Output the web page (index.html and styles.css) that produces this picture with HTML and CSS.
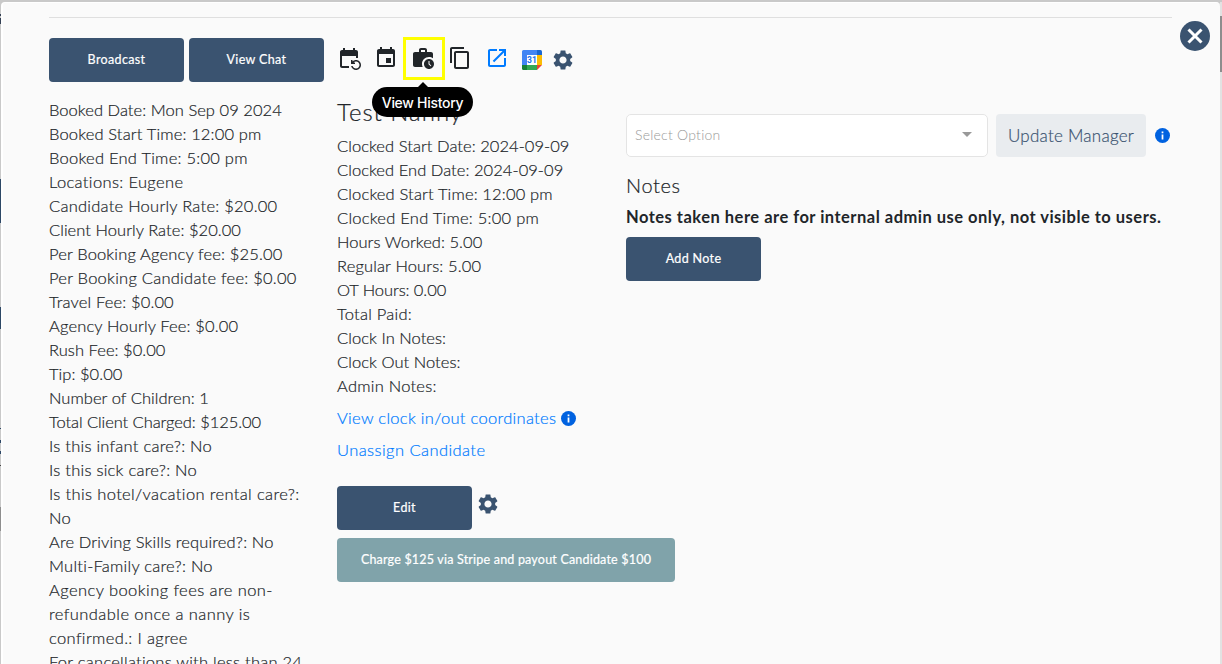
FILE: index.html
```html
<!DOCTYPE html>
<html lang="en">
<head>
<meta charset="utf-8">
<title>Booking details</title>
<link rel="stylesheet" href="styles.css">
</head>
<body>
<svg width="0" height="0" class="defs">
  <symbol id="gear" viewBox="0 0 24 24"><path d="M19.14 12.94c.04-.3.06-.61.06-.94 0-.32-.02-.64-.07-.94l2.03-1.58c.18-.14.23-.41.12-.61l-1.92-3.32c-.12-.22-.37-.29-.59-.22l-2.39.96c-.5-.38-1.03-.7-1.62-.94l-.36-2.54c-.04-.24-.24-.41-.48-.41h-3.84c-.24 0-.43.17-.47.41l-.36 2.54c-.59.24-1.13.57-1.62.94l-2.39-.96c-.22-.08-.47 0-.59.22L2.74 8.87c-.12.21-.08.47.12.61l2.03 1.58c-.05.3-.09.63-.09.94s.02.64.07.94l-2.03 1.58c-.18.14-.23.41-.12.61l1.92 3.32c.12.22.37.29.59.22l2.39-.96c.5.38 1.03.7 1.62.94l.36 2.54c.05.24.24.41.48.41h3.84c.24 0 .44-.17.47-.41l.36-2.54c.59-.24 1.13-.56 1.62-.94l2.39.96c.22.08.47 0 .59-.22l1.92-3.32c.12-.22.07-.47-.12-.61l-2.01-1.58zM12 15.600c-1.980 0-3.600-1.620-3.600-3.600s1.620-3.600 3.600-3.600 3.600 1.620 3.600 3.600-1.620 3.600-3.600 3.600z"/></symbol>
  <symbol id="info" viewBox="0 0 24 24"><path d="M12 0a12 12 0 1 0 0 24 12 12 0 0 0 0-24z"/><path class="info-i" d="M10.600 10.500h2.800v8h-2.800zM10.600 5.400h2.800v2.800h-2.800z"/></symbol>
</svg>
<div class="page">
  <div class="backdrop-edge"></div>
  <main class="modal">
    <hr class="rule">
    <div class="toolbar">
      <div class="buttons">
        <button class="btn">Broadcast</button>
        <button class="btn">View Chat</button>
      </div>
      <div class="icons">
        <svg class="icon" viewBox="0 0 24 24"><path d="M21 12V6c0-1.1-.9-2-2-2h-1V2h-2v2H8V2H6v2H5c-1.1 0-2 .9-2 2v14c0 1.1.9 2 2 2h7v-2H5V10h14v2h2zM15.64 20c.43 1.45 1.77 2.5 3.36 2.5 1.93 0 3.5-1.57 3.5-3.5s-1.57-3.5-3.5-3.5c-.95 0-1.82.38-2.45 1H18V18h-4v-4h1.5v1.43C16.4 14.55 17.64 14 19 14c2.76 0 5 2.24 5 5s-2.24 5-5 5c-2.42 0-4.44-1.72-4.9-4h1.54z"/></svg>
        <svg class="icon" viewBox="0 0 24 24"><path d="M17 12h-5v5h5v-5zM16 1v2H8V1H6v2H5c-1.11 0-1.99.9-1.99 2L3 19c0 1.1.89 2 2 2h14c1.1 0 2-.9 2-2V5c0-1.1-.9-2-2-2h-1V1h-2zm3 18H5V8h14v11z"/></svg>
        <span class="history">
          <svg class="icon" viewBox="0 0 24 24"><path d="M18 11c1.49 0 2.87.47 4 1.26V8c0-1.11-.89-2-2-2h-4V4c0-1.11-.89-2-2-2h-4c-1.11 0-2 .89-2 2v2H4c-1.11 0-1.99.89-1.99 2L2 19c0 1.11.89 2 2 2h7.68c-.43-.91-.68-1.92-.68-3 0-3.87 3.13-7 7-7zM10 4h4v2h-4V4z"/><path d="M18 13c-2.76 0-5 2.24-5 5s2.24 5 5 5 5-2.24 5-5-2.24-5-5-5zm1.65 7.35L17.5 18.2V15h1v2.79l1.85 1.85-.7.71z"/></svg>
          <span class="highlight"></span>
          <span class="tooltip">View History</span>
        </span>
        <svg class="icon" viewBox="0 0 24 24"><path d="M16 1H4c-1.1 0-2 .9-2 2v14h2V3h12V1zm3 4H8c-1.1 0-2 .9-2 2v14c0 1.1.9 2 2 2h11c1.1 0 2-.9 2-2V7c0-1.1-.9-2-2-2zm0 16H8V7h11v14z"/></svg>
        <svg class="icon launch" viewBox="0 0 24 24"><path d="M19 19H5V5h7V3H5c-1.11 0-2 .9-2 2v14c0 1.1.89 2 2 2h14c1.1 0 2-.9 2-2v-7h-2v7zM14 3v2h3.59l-9.83 9.83 1.41 1.41L19 6.41V10h2V3h-7z"/></svg>
        <svg class="gcal" viewBox="0 0 20 20">
          <path fill="#4285f4" d="M1.5 0H15v5H5v10H0V1.5A1.5 1.5 0 0 1 1.5 0z"/>
          <path fill="#1967d2" d="M15 0h3.5A1.5 1.5 0 0 1 20 1.5V5h-5z"/>
          <path fill="#fbbc04" d="M15 5h5v10h-5z"/>
          <path fill="#34a853" d="M5 15h10v5H5z"/>
          <path fill="#188038" d="M0 15h5v5H1.5A1.5 1.5 0 0 1 0 18.5z"/>
          <path fill="#ea4335" d="M15 15h5l-5 5z"/>
          <path fill="#fff" d="M5 5h10v10H5z"/>
          <text x="10" y="13" text-anchor="middle">31</text>
        </svg>
        <svg class="gear"><use href="#gear"/></svg>
      </div>
      <button class="close" aria-label="Close"><svg viewBox="0 0 30 30"><path d="M8.5 8.500l13 13M21.500 8.500l-13 13"/></svg></button>
    </div>
    <div class="columns">
      <section class="booking">
        <p class="snug">Booked Date: Mon Sep 09 2024</p>
        <p class="trim">Booked Start Time: 12:00 pm</p>
        <p>Booked End Time: 5:00 pm</p>
        <p class="loose">Locations: Eugene</p>
        <p>Candidate Hourly Rate: $20.00</p>
        <p class="snug">Client Hourly Rate: $20.00</p>
        <p class="trim">Per Booking Agency fee: $25.00</p>
        <p>Per Booking Candidate fee: $0.00</p>
        <p class="trim">Travel Fee: $0.00</p>
        <p class="trim">Agency Hourly Fee: $0.00</p>
        <p class="snug">Rush Fee: $0.00</p>
        <p class="snug">Tip: $0.00</p>
        <p class="snug">Number of Children: 1</p>
        <p class="tight">Total Client Charged: $125.00</p>
        <p>Is this infant care?: No</p>
        <p>Is this sick care?: No</p>
        <p class="loose">Is this hotel/vacation rental care?:<br>No</p>
        <p class="trim">Are Driving Skills required?: No</p>
        <p>Multi-Family care?: No</p>
        <p class="looser">Agency booking fees are non-<br>refundable once a nanny is</p>
        <p class="loose">confirmed.: I agree</p>
        <p>For cancellations with less than 24</p>
      </section>
      <section class="clock">
        <h2>Test Nanny</h2>
        <p class="snug">Clocked Start Date: 2024-09-09</p>
        <p class="snug">Clocked End Date: 2024-09-09</p>
        <p class="trim">Clocked Start Time: 12:00 pm</p>
        <p>Clocked End Time: 5:00 pm</p>
        <p class="snug">Hours Worked: 5.00</p>
        <p class="trim">Regular Hours: 5.00</p>
        <p class="tight">OT Hours: 0.00</p>
        <p>Total Paid:</p>
        <p class="snug">Clock In Notes:</p>
        <p class="snug">Clock Out Notes:</p>
        <p>Admin Notes:</p>
        <p class="link"><a>View clock in/out coordinates</a><svg class="info"><use href="#info"/></svg></p>
        <p class="link looser"><a>Unassign Candidate</a></p>
        <div class="edit-row"><button class="btn">Edit</button><svg class="gear"><use href="#gear"/></svg></div>
        <button class="btn charge">Charge $125 via Stripe and payout Candidate $100</button>
      </section>
      <section class="notes">
        <div class="manager">
          <div class="select"><span>Select Option</span><i class="caret"></i></div>
          <button class="update">Update Manager</button>
          <svg class="info"><use href="#info"/></svg>
        </div>
        <h3>Notes</h3>
        <p class="notice">Notes taken here are for internal admin use only, not visible to users.</p>
        <button class="btn">Add Note</button>
      </section>
    </div>
  </main>
  <div class="scrollbar"><div class="thumb"></div></div>
</div>
</body>
</html>
```
FILE: styles.css
```css
* { box-sizing: border-box; }
body {
  margin: 0;
  height: 664px;
  overflow: hidden;
  background: #c9c9c9;
  color: #212529;
  font: 300 16.5px/24px Lato, "Open Sans", sans-serif;
  letter-spacing: 0.25px;
}
h2, h3, p { margin: 0; }
p { white-space: nowrap; }
.booking p, .clock p, .clock h2, .notes h3, .update { -webkit-text-stroke: 0.2px; }
.trim { letter-spacing: 0.15px; }
.snug { letter-spacing: 0.05px; }
.tight { letter-spacing: -0.07px; }
.loose { letter-spacing: 0.36px; }
.looser { letter-spacing: 0.43px; }
svg { display: block; flex: none; }
button { font-family: inherit; letter-spacing: inherit; border: 0; padding: 0; }
.defs { position: absolute; }
.page { display: flex; height: 664px; padding-top: 2px; }
.backdrop-edge {
  width: 1px;
  background: linear-gradient(#c9c9c9 0 12px, #344054 12px 14px, #c9c9c9 14px 16px, #344054 16px 22px, #c9c9c9 22px 177px, #2d4866 177px 221px, #c9c9c9 221px 305px, #2d4866 305px 327px, #c9c9c9 327px 426px, #2d4866 426px 427px, #c9c9c9 427px 438px, #2d4866 438px 441px, #c9c9c9 441px 449px, #2d4866 449px 452px, #c9c9c9 452px 463px, #444 463px 464px, #c9c9c9 464px 505px, #8e8e8e 505px 529px, #c9c9c9 529px);
}
.modal {
  width: 1219px;
  padding: 14px 10px 0 46px;
  background: #fafafa;
  border-top: 1px solid #fff;
  border-left: 2px solid #fff;
  border-radius: 4px 4px 0 0;
  overflow: hidden;
}
.rule { width: 1123px; height: 1px; margin: 0; border: 0; background: #dfdfdf; }
.toolbar { display: flex; height: 80px; padding-top: 20px; }
.buttons { display: flex; gap: 5px; width: 288px; }
.btn {
  display: block;
  width: 135px;
  height: 44px;
  padding-bottom: 1px;
  border-radius: 4px;
  background: #3a5370;
  color: #fff;
  font-size: 12.5px;
  font-weight: 400;
  letter-spacing: 0.35px;
  white-space: nowrap;
  -webkit-text-stroke: 0.2px;
}
.icons { display: flex; gap: 13px; padding-top: 8px; fill: #212529; }
.icon { width: 24px; height: 24px; }
.launch { fill: #007bff; }
.gcal { width: 20px; height: 20px; margin: 4px 0 0; }
.gcal text { font: 700 8.5px Roboto, sans-serif; letter-spacing: 0; fill: #1a73e8; }
.icons .gear { margin: 2px 0 0 -4px; }
.gear { width: 24px; height: 24px; fill: #3a5370; }
.history { position: relative; height: 24px; }
.highlight {
  position: absolute;
  left: -8px;
  top: -9px;
  width: 42px;
  height: 43px;
  border: 3px solid #ff0;
}
.tooltip {
  position: absolute;
  z-index: 2;
  left: -39px;
  top: 41px;
  width: 101px;
  height: 30px;
  border-radius: 15px;
  background: #000;
  color: #fff;
  font: 500 14px/31px Inter, sans-serif;
  letter-spacing: -0.3px;
  text-align: center;
  white-space: nowrap;
}
.tooltip::before {
  content: "";
  position: absolute;
  left: 45px;
  top: -5px;
  border: 6px solid transparent;
  border-top: 0;
  border-bottom-color: #000;
}
.close { width: 30px; height: 30px; margin: -17px 0 0 auto; border-radius: 50%; background: #3a5370; }
.close path { stroke: #fff; stroke-width: 3; fill: none; }
.columns { display: grid; grid-template-columns: 288px 289px 1fr; }
.clock h2 { height: 36px; font-size: 24px; line-height: 28px; font-weight: 300; letter-spacing: 1px; }
.link { display: flex; align-items: center; gap: 5px; margin-top: 8px; color: #007bff; }
.link:not(.looser) { letter-spacing: 0.3px; }
.info { width: 15px; height: 15px; fill: #0062e0; }
.info-i { fill: #fff; }
.edit-row { display: flex; gap: 4px; margin-top: 24px; }
.edit-row .gear { margin-top: 6px; }
.charge { width: 338px; margin-top: 8px; background: #80a3aa; letter-spacing: 0.2px; }
.manager { display: flex; gap: 8px; align-items: center; margin-top: 16px; }
.select {
  display: flex;
  align-items: center;
  justify-content: space-between;
  width: 362px;
  height: 43px;
  padding: 0 15px 2px 8px;
  border: 1px solid #e4e4e4;
  border-radius: 5px;
  background: #fff;
  color: #999;
  font-size: 14px;
}
.caret { border: 5px solid transparent; border-top-color: #999; border-bottom: 0; margin-top: -1px; }
.update { width: 150px; height: 43px; border-radius: 4px; background: #e9ecef; color: #3a5370; font-size: 17px; font-weight: 300; }
.manager .info { margin-left: 1px; }
.notes h3 { margin-top: 16px; font-size: 20px; line-height: 24px; font-weight: 300; letter-spacing: 0.6px; }
.notice { margin: 8px 0; font-weight: 700; letter-spacing: 0.49px; }
.scrollbar { width: 2px; background: #e2e2e2; padding-top: 14px; }
.thumb { height: 56px; background: #8d8d8d; }
```
